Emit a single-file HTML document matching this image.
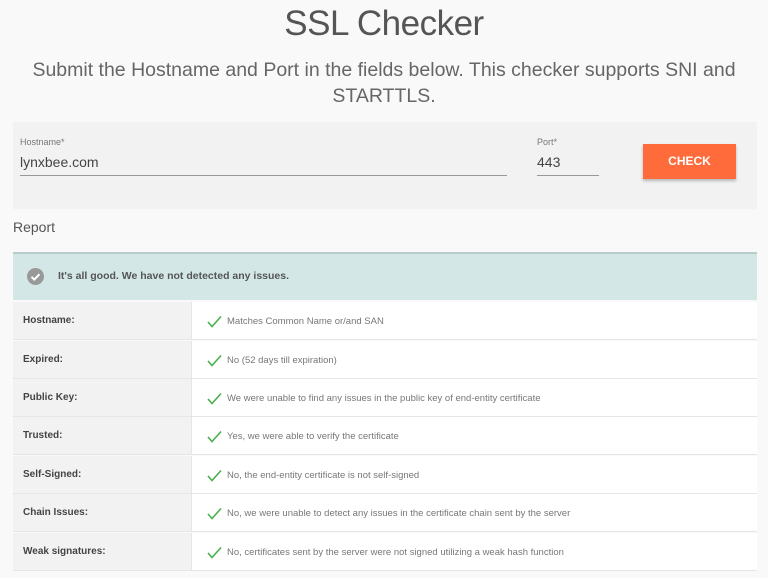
<!DOCTYPE html>
<html><head><meta charset="utf-8"><style>
*{margin:0;padding:0;box-sizing:border-box}
body{width:768px;height:578px;overflow:hidden;background:#f9f9f9;font-family:"Liberation Sans",sans-serif;color:#555;position:relative}
.a{position:absolute}
h1{position:absolute;top:4px;left:0;width:768px;text-align:center;font-weight:normal;font-size:35px;color:#555;letter-spacing:-0.5px}
.sub{position:absolute;top:57px;left:20px;width:728px;text-align:center;font-size:19.5px;line-height:26px;color:#666;letter-spacing:0px}
.panel{left:13px;top:122px;width:744px;height:87px;background:#f2f2f2}
.lbl{font-size:9px;color:#777}
.val{font-size:14px;color:#444}
.line{height:1px;background:#999}
.btn{left:643px;top:144px;width:93px;height:35px;background:#ff6b3a;color:#fff;font-weight:bold;font-size:12px;text-align:center;line-height:34px;box-shadow:0 2px 3px rgba(0,0,0,.25)}
.rep{left:13px;top:219px;font-size:14px;color:#555}
.ban{left:13px;top:252px;width:744px;height:48px;background:#d3e7e7;border-top:2px solid #b8cccc}
.row{left:13px;width:744px;height:38px;background:#fff;border-bottom:1px solid #e6e6e6}
.row .k{position:absolute;left:0;top:0;width:179px;height:100%;background:#f2f2f2;border-right:1px solid #e6e6e6;font-size:10px;font-weight:bold;color:#444;padding:13px 0 0 10px}
.row svg{position:absolute;left:194px;top:13px}
.row .v{position:absolute;left:214px;top:14px;font-size:9.5px;color:#777;white-space:nowrap}
</style></head><body>
<h1>SSL Checker</h1>
<div class="sub">Submit the Hostname and Port in the fields below. This checker supports SNI and STARTTLS.</div>
<div class="a panel"></div>
<div class="a lbl" style="left:20px;top:137px">Hostname*</div>
<div class="a val" style="left:20px;top:154px">lynxbee.com</div>
<div class="a line" style="left:20px;top:175px;width:487px"></div>
<div class="a lbl" style="left:537px;top:137px">Port*</div>
<div class="a val" style="left:537px;top:154px">443</div>
<div class="a line" style="left:537px;top:175px;width:62px"></div>
<div class="a btn">CHECK</div>
<div class="a rep">Report</div>
<div class="a ban">
<svg class="a" style="left:14px;top:14px" width="17" height="17" viewBox="0 0 17 17"><circle cx="8.5" cy="8.5" r="8.5" fill="#999"/><path d="M4.5 8.8l2.8 2.8 5.2-5.4" stroke="#fff" stroke-width="2" fill="none"/></svg>
<div class="a" style="left:45px;top:16px;font-size:10.5px;font-weight:bold;color:#555">It's all good. We have not detected any issues.</div>
</div>
<div class="a row" style="top:302px"><div class="k">Hostname:</div><svg width="16" height="14" viewBox="0 0 16 14"><path d="M1 7l4 4.5L14 1.5" stroke="#4caf50" stroke-width="1.6" fill="none"/></svg><div class="v">Matches Common Name or/and SAN</div></div>
<div class="a row" style="top:341px"><div class="k">Expired:</div><svg width="16" height="14" viewBox="0 0 16 14"><path d="M1 7l4 4.5L14 1.5" stroke="#4caf50" stroke-width="1.6" fill="none"/></svg><div class="v">No (52 days till expiration)</div></div>
<div class="a row" style="top:379px"><div class="k">Public Key:</div><svg width="16" height="14" viewBox="0 0 16 14"><path d="M1 7l4 4.5L14 1.5" stroke="#4caf50" stroke-width="1.6" fill="none"/></svg><div class="v">We were unable to find any issues in the public key of end-entity certificate</div></div>
<div class="a row" style="top:417px"><div class="k">Trusted:</div><svg width="16" height="14" viewBox="0 0 16 14"><path d="M1 7l4 4.5L14 1.5" stroke="#4caf50" stroke-width="1.6" fill="none"/></svg><div class="v">Yes, we were able to verify the certificate</div></div>
<div class="a row" style="top:456px"><div class="k">Self-Signed:</div><svg width="16" height="14" viewBox="0 0 16 14"><path d="M1 7l4 4.5L14 1.5" stroke="#4caf50" stroke-width="1.6" fill="none"/></svg><div class="v">No, the end-entity certificate is not self-signed</div></div>
<div class="a row" style="top:494px"><div class="k">Chain Issues:</div><svg width="16" height="14" viewBox="0 0 16 14"><path d="M1 7l4 4.5L14 1.5" stroke="#4caf50" stroke-width="1.6" fill="none"/></svg><div class="v">No, we were unable to detect any issues in the certificate chain sent by the server</div></div>
<div class="a row" style="top:533px"><div class="k">Weak signatures:</div><svg width="16" height="14" viewBox="0 0 16 14"><path d="M1 7l4 4.5L14 1.5" stroke="#4caf50" stroke-width="1.6" fill="none"/></svg><div class="v">No, certificates sent by the server were not signed utilizing a weak hash function</div></div>
</body></html>
